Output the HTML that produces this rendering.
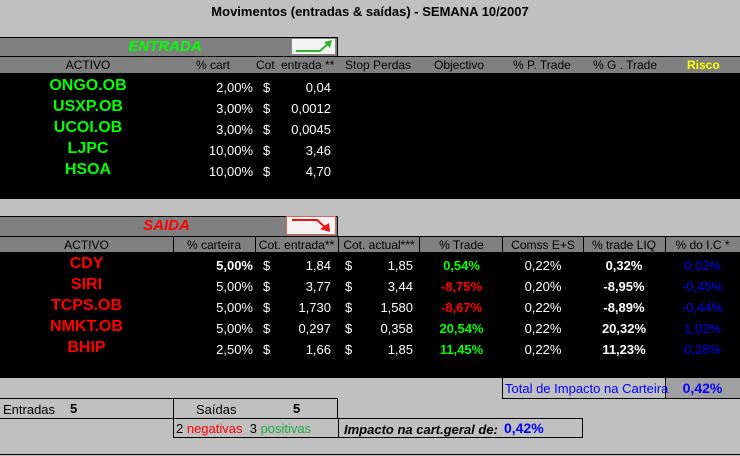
<!DOCTYPE html>
<html><head><meta charset="utf-8"><style>
*{margin:0;padding:0;box-sizing:border-box}
body{width:740px;height:456px;background:#c0c0c0;position:relative;overflow:hidden;font-family:"Liberation Sans",Arial,sans-serif;font-size:12px;color:#000}
.a{position:absolute;white-space:nowrap}
.r{text-align:right}.c{text-align:center}
.b{font-weight:bold}
.g{color:#00ff00}.red{color:#ff0000}.w{color:#fff}.bl{color:#0000ff}
.big{font-size:16px;font-weight:bold}
</style></head><body>
<div class="a b c" style="left:0;width:740px;top:4px;font-size:13px">Movimentos (entradas &amp; saídas) - SEMANA 10/2007</div>

<!-- ENTRADA -->
<div class="a" style="left:0;top:37px;width:338px;height:19px;background:#808080;border-top:1px solid #000;border-right:1px solid #000"></div>
<div class="a c b" style="left:0;top:38px;width:330px;font-size:15px;font-style:italic;color:#00ff00">ENTRADA</div>
<div class="a" style="left:291px;top:38px;width:45px;height:17px;background:#f4f4f4;border:1px solid #888"><svg width="43" height="15" viewBox="0 0 43 15"><path d="M4 12 L28 12 L38 3" stroke="#2db52d" stroke-width="2" fill="none"/><path d="M32 3 L40 1 L38 9 Z" fill="#2db52d"/></svg></div>
<div class="a" style="left:0;top:56px;width:740px;height:17px;background:#808080;border-top:1px solid #000"></div>
<div class="a" style="left:0;top:58px;width:740px;height:14px">
<span class="a c" style="left:0;width:176px">ACTIVO</span>
<span class="a" style="left:196px">% cart</span>
<span class="a" style="left:256px">Cot</span>
<span class="a" style="left:281px">entrada **</span>
<span class="a" style="left:345px">Stop Perdas</span>
<span class="a" style="left:434px">Objectivo</span>
<span class="a" style="left:513px">% P. Trade</span>
<span class="a" style="left:593px">% G . Trade</span>
<span class="a b" style="left:687px;color:#ffff00">Risco</span>
</div>
<div class="a" style="left:0;top:73px;width:740px;height:126px;background:#000"></div>
<div class="a g big c" style="left:0;width:176px;top:75px;line-height:21px">ONGO.OB<br>USXP.OB<br>UCOI.OB<br>LJPC<br>HSOA</div>
<div class="a w r" style="left:190px;width:63px;top:77px;line-height:21px;font-size:13px">2,00%<br>3,00%<br>3,00%<br>10,00%<br>10,00%</div>
<div class="a w" style="left:263px;top:77px;line-height:21px;font-size:13px">$<br>$<br>$<br>$<br>$</div>
<div class="a w r" style="left:280px;width:51px;top:77px;line-height:21px;font-size:13px">0,04<br>0,0012<br>0,0045<br>3,46<br>4,70</div>

<!-- SAIDA -->
<div class="a" style="left:0;top:216px;width:338px;height:20px;background:#808080;border-top:1px solid #000;border-right:1px solid #000"></div>
<div class="a c b" style="left:0;top:217px;width:333px;font-size:15px;font-style:italic;color:#ff0000">SAIDA</div>
<div class="a" style="left:286px;top:216px;width:50px;height:19px;background:#f4f4f4;border:1px solid #e06060"><svg width="48" height="17" viewBox="0 0 48 17"><path d="M5 3 L30 3 L40 12" stroke="#ee1111" stroke-width="2" fill="none"/><path d="M33 12 L43 15 L42 6 Z" fill="#ee1111"/></svg></div>
<div class="a" style="left:0;top:236px;width:740px;height:17px;background:#808080;border-top:1px solid #000;border-bottom:1px solid #000"></div>
<div class="a" style="left:173px;top:236px;width:1px;height:17px;background:#000"></div>
<div class="a" style="left:255px;top:236px;width:1px;height:17px;background:#000"></div>
<div class="a" style="left:338px;top:236px;width:1px;height:17px;background:#000"></div>
<div class="a" style="left:419px;top:236px;width:1px;height:17px;background:#000"></div>
<div class="a" style="left:502px;top:236px;width:1px;height:17px;background:#000"></div>
<div class="a" style="left:583px;top:236px;width:1px;height:17px;background:#000"></div>
<div class="a" style="left:665px;top:236px;width:1px;height:17px;background:#000"></div>
<div class="a" style="left:0;top:238px;width:740px">
<span class="a c" style="left:0;width:173px">ACTIVO</span>
<span class="a c" style="left:173px;width:82px">% carteira</span>
<span class="a c" style="left:255px;width:83px">Cot. entrada**</span>
<span class="a c" style="left:338px;width:82px">Cot. actual***</span>
<span class="a c" style="left:420px;width:83px">% Trade</span>
<span class="a c" style="left:503px;width:80px">Comss E+S</span>
<span class="a c" style="left:583px;width:82px">% trade LIQ</span>
<span class="a c" style="left:665px;width:75px">% do I.C *</span>
</div>
<div class="a" style="left:0;top:253px;width:740px;height:125px;background:#000"></div>
<div class="a red big c" style="left:0;width:173px;top:253px;line-height:21px">CDY<br>SIRI<br>TCPS.OB<br>NMKT.OB<br>BHIP</div>
<div class="a w r" style="left:190px;width:63px;top:255px;line-height:21px;font-size:13px"><b>5,00%</b><br>5,00%<br>5,00%<br>5,00%<br>2,50%</div>
<div class="a w" style="left:263px;top:255px;line-height:21px;font-size:13px">$<br>$<br>$<br>$<br>$</div>
<div class="a w r" style="left:280px;width:51px;top:255px;line-height:21px;font-size:13px">1,84<br>3,77<br>1,730<br>0,297<br>1,66</div>
<div class="a w" style="left:345px;top:255px;line-height:21px;font-size:13px">$<br>$<br>$<br>$<br>$</div>
<div class="a w r" style="left:360px;width:53px;top:255px;line-height:21px;font-size:13px">1,85<br>3,44<br>1,580<br>0,358<br>1,85</div>
<div class="a b c" style="left:420px;width:83px;top:255px;line-height:21px;font-size:13px"><span class="g">0,54%</span><br><span class="red">-8,75%</span><br><span class="red">-8,67%</span><br><span class="g">20,54%</span><br><span class="g">11,45%</span></div>
<div class="a w c" style="left:503px;width:80px;top:255px;line-height:21px;font-size:13px">0,22%<br>0,20%<br>0,22%<br>0,22%<br>0,22%</div>
<div class="a w b c" style="left:583px;width:82px;top:255px;line-height:21px;font-size:13px">0,32%<br>-8,95%<br>-8,89%<br>20,32%<br>11,23%</div>
<div class="a bl c" style="left:665px;width:75px;top:255px;line-height:21px;font-size:13px">0,02%<br>-0,45%<br>-0,44%<br>1,02%<br>0,28%</div>

<!-- totals -->
<div class="a" style="left:502px;top:378px;width:238px;height:21px;border-left:1px solid #000;border-bottom:1px solid #000"></div>
<div class="a" style="left:665px;top:378px;width:75px;height:20px;background:#a0a0a0;border-left:1px solid #000"></div>
<div class="a bl" style="left:505px;top:381px;font-size:13px">Total de Impacto na Carteira</div>
<div class="a bl b c" style="left:665px;width:75px;top:380px;font-size:14px">0,42%</div>

<div class="a" style="left:0;top:398px;width:338px;height:1px;background:#000"></div>
<div class="a" style="left:173px;top:398px;width:165px;height:20px;border-left:1px solid #000;border-right:1px solid #000"></div>
<div class="a" style="left:0;top:418px;width:583px;height:1px;background:#000"></div>
<div class="a" style="left:173px;top:418px;width:410px;height:20px;border:1px solid #000;border-top:none"></div>
<div class="a" style="left:338px;top:418px;width:1px;height:20px;background:#000"></div>
<div class="a" style="left:0;top:454px;width:740px;height:1px;background:#000"></div>
<div class="a" style="left:3px;top:402px;font-size:13px">Entradas</div>
<div class="a b" style="left:70px;top:401px;font-size:13px">5</div>
<div class="a" style="left:196px;top:402px;font-size:13px">Saídas</div>
<div class="a b" style="left:293px;top:401px;font-size:13px">5</div>
<div class="a" style="left:176px;top:421px;font-size:13px">2 <span class="red">negativas</span>&nbsp; 3 <span style="color:#22aa44">positivas</span></div>
<div class="a b" style="left:344px;top:422px;font-size:13px;font-style:italic">Impacto na cart.geral de:</div>
<div class="a bl b" style="left:504px;top:420px;font-size:14px">0,42%</div>
</body></html>
